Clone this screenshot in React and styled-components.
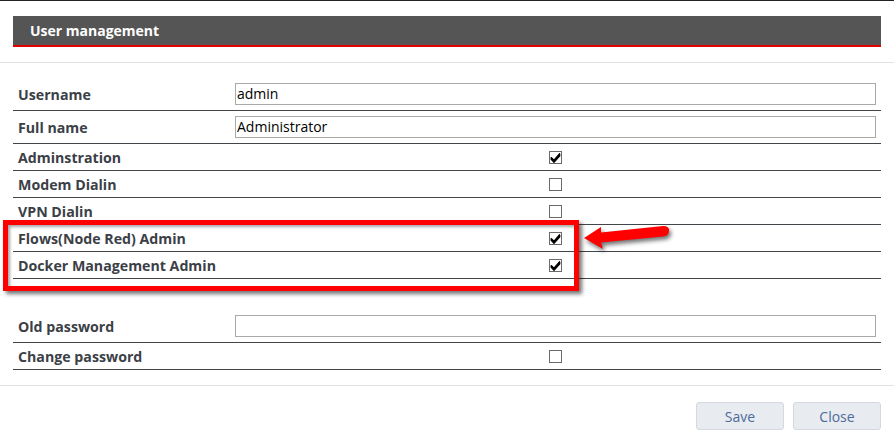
import React from "react";
import styled, { createGlobalStyle } from "styled-components";

const GlobalStyle = createGlobalStyle`
  html, body {
    margin: 0;
    padding: 0;
    background: #ffffff;
  }
  body {
    font-family: "Open Sans", "Noto Sans", Arial, sans-serif;
  }
`;

const Page = styled.div`
  position: relative;
  width: 894px;
  height: 445px;
  overflow: hidden;
  border-top: 1px solid #222;
  box-sizing: border-box;
  background: #fff;
`;

const HeaderWrap = styled.div`
  padding: 15px 13px 0 13px;
`;

const HeaderBar = styled.div`
  height: 29px;
  background: #555555;
  border-bottom: 2px solid #e50000;
  display: flex;
  align-items: center;
  padding-left: 17px;
  color: #fff;
  font-weight: 700;
  font-size: 14px;
`;

const Divider = styled.div`
  height: 1px;
  background: #e3e3e3;
  margin-top: ${props => props.top}px;
`;

const Table = styled.div`
  margin: ${props => props.top}px 13px 0 13px;
`;

const Row = styled.div`
  display: grid;
  grid-template-columns: 222px 1fr;
  align-items: center;
  height: ${props => (props.tall ? 32 : 26)}px;
  border-bottom: 1px solid #41464b;
`;

const Label = styled.div`
  padding-left: 5px;
  font-weight: 700;
  font-size: 14.2px;
  color: #3b4046;
  white-space: nowrap;
`;

const Value = styled.div`
  display: flex;
  justify-content: ${props => (props.center ? "center" : "stretch")};
  padding-right: 5px;
`;

const TextInput = styled.div`
  flex: 1;
  height: 22px;
  box-sizing: border-box;
  border: 1px solid #a9a9a9;
  font-size: 14px;
  color: #000;
  line-height: 20px;
  padding-left: 1px;
`;

const Box = styled.span`
  width: 13px;
  height: 13px;
  box-sizing: border-box;
  border: 1px solid #6a6a6a;
  background: #fff;
  display: flex;
  align-items: center;
  justify-content: center;
`;

const Footer = styled.div`
  display: flex;
  justify-content: flex-end;
  gap: 9px;
  padding: 16px 13px 0 0;
`;

const Button = styled.div`
  width: 88px;
  height: 28px;
  box-sizing: border-box;
  border: 1px solid #d4d9de;
  border-radius: 3px;
  background: #e8ecf0;
  color: #4e6a9c;
  font-size: 14px;
  display: flex;
  align-items: center;
  justify-content: center;
`;

const Highlight = styled.div`
  position: absolute;
  left: 3px;
  top: 219px;
  width: 576px;
  height: 71px;
  box-sizing: border-box;
  border: 5px solid #f00;
  box-shadow: 3px 3px 4px rgba(0, 0, 0, 0.55), inset 2px 2px 3px rgba(0, 0, 0, 0.35);
  pointer-events: none;
`;

const Arrow = styled.svg`
  position: absolute;
  left: 0;
  top: 0;
  filter: drop-shadow(2px 3px 2px rgba(0, 0, 0, 0.55));
  pointer-events: none;
`;

const Checkbox = ({ checked }) => (
  <Box>
    {checked && (
      <svg width="11" height="11" viewBox="0 0 11 11">
        <path d="M1.2 5.6 L4 8.2 L9.6 1.8 L9.8 3.8 L4 10.2 L1.2 7.4 Z" fill="#000" stroke="#000" strokeWidth="1.3" strokeLinejoin="round" />
      </svg>
    )}
  </Box>
);

const topRows = [
  { label: "Adminstration", checked: true },
  { label: "Modem Dialin", checked: false },
  { label: "VPN Dialin", checked: false },
  { label: "Flows(Node Red) Admin", checked: true },
  { label: "Docker Management Admin", checked: true }
];

export default function App() {
  return (
    <Page>
      <GlobalStyle />
      <HeaderWrap>
        <HeaderBar>User management</HeaderBar>
      </HeaderWrap>
      <Divider top={15} />

      <Table top={15}>
        <Row tall>
          <Label>Username</Label>
          <Value>
            <TextInput>admin</TextInput>
          </Value>
        </Row>
        <Row tall>
          <Label>Full name</Label>
          <Value>
            <TextInput>Administrator</TextInput>
          </Value>
        </Row>
        {topRows.map(r => (
          <Row key={r.label}>
            <Label>{r.label}</Label>
            <Value center>
              <Checkbox checked={r.checked} />
            </Value>
          </Row>
        ))}
      </Table>

      <Table top={31}>
        <Row tall>
          <Label>Old password</Label>
          <Value>
            <TextInput />
          </Value>
        </Row>
        <Row>
          <Label>Change password</Label>
          <Value center>
            <Checkbox checked={false} />
          </Value>
        </Row>
      </Table>

      <Divider top={15} />

      <Footer>
        <Button>Save</Button>
        <Button>Close</Button>
      </Footer>

      <Highlight />
      <Arrow width="894" height="445" viewBox="0 0 894 445">
        <path
          d="M584 237 L601 226 L601 231.5 L663 225 Q670 225 669 230.5 Q668 235 663 235.5 L601 241.5 L603 248 Z"
          fill="#f00"
        />
      </Arrow>
    </Page>
  );
}
